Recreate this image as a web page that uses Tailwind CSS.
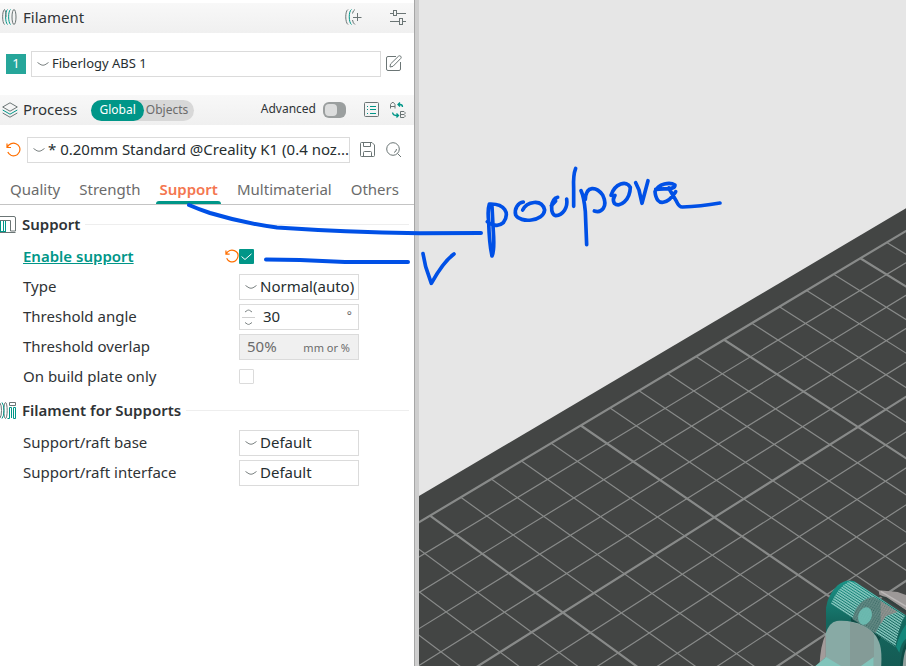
<!DOCTYPE html>
<html lang="en">
<head>
<meta charset="utf-8">
<title>Print settings</title>
<script src="https://cdn.jsdelivr.net/npm/@tailwindcss/browser@4"></script>
</head>
<body class="relative flex min-h-screen overflow-hidden bg-white font-['Noto_Sans',sans-serif] text-[15px] leading-5 text-[#2f3336]">

<aside class="flex w-[419px] shrink-0 flex-col border-r-4 border-[#cecece]">
 <div class="grow border-r border-[#a6a6a6] pt-[3px]">

  <header class="flex h-[30px] items-center bg-linear-to-b from-[#f8f8f8] to-[#f0f0f0] pr-2 pb-[3px] pl-px">
    <svg class="size-4" viewBox="0 0 16 16" fill="none" stroke="#6b7575"><path d="M3.500 .500C1 2 1 13.500 3.500 15.500"/><path stroke="#009688" d="M6.500 .500C4 2 4 13.500 6.500 15.500M9.500 .500C7 2 7 13.500 9.500 15.500"/><path d="M3.500 .500C4.500 2 5 4 5 8"/><ellipse cx="13" cy="8" rx="2" ry="7.500"/></svg>
    <h2 class="ml-1.5 grow">Filament</h2>
    <button aria-label="Add filament" class="mr-7"><svg class="h-4 w-[18px]" viewBox="0 0 18 16" fill="none" stroke="#6b7575"><path d="M4 .500C1 2 1 13.500 4 15.500M11 .500Q9 1.500 8.500 4.500M8.500 11Q9 14.500 11 15.500M9 8.500h8.500M13.500 4v8"/><path stroke="#009688" d="M7.500 .500C4.500 2 4.500 13.500 7.500 15.500"/></svg></button>
    <button aria-label="Filament settings"><svg class="size-4" viewBox="0 0 16 16" fill="none" stroke="#6b7575"><path d="M0 4.500h3M7 4.500h9M0 12.500h9M13 12.500h3"/><rect x="3.500" y="1.500" width="3" height="5"/><rect x="9.500" y="9.500" width="3" height="6"/></svg></button>
  </header>

  <div class="flex items-center py-[18px] pr-3 pl-1.5">
    <span class="flex size-5 items-center justify-center bg-[#26a69a] pb-0.5 text-[13px] text-white">1</span>
    <div class="relative ml-[5px] grow">
      <select aria-label="Filament" class="block h-[26px] w-full appearance-none border border-[#dbdbdb] bg-white pb-0.5 pl-5 text-[13px] text-[#262e30]"><option>Fiberlogy ABS 1</option></select>
      <svg class="pointer-events-none absolute top-2.5 left-1.5 h-1.5 w-3" viewBox="0 0 12 6" fill="none" stroke="#7b8282"><path d="M.5 1.500 4 3.800Q6 4.700 8 3.800L11.500 1.500"/></svg>
    </div>
    <button aria-label="Edit filament" class="ml-[5px] pb-0.5"><svg class="size-4" viewBox="0 0 16 16" fill="none" stroke="#6b7575"><path d="M10 1.500H2Q.5 1.500 .5 3V14Q.5 15.500 2 15.500H13Q14.500 15.500 14.500 14V7M4 12 4.500 9 12.500 1.200Q13.500 .300 14.700 1.200 15.700 2.300 14.800 3.400L7 11.300Z"/></svg></button>
  </div>

  <header class="flex h-[30px] items-center bg-linear-to-b from-[#f8f8f8] to-[#f0f0f0] pr-2 pl-0.5">
    <svg class="size-4" viewBox="0 0 16 16" fill="none" stroke="#6b7575"><path d="M8 .800 15.300 5 8 9.200 .700 5Z"/><path stroke="#009688" d="M.7 8 8 12.200 15.300 8"/><path d="M.7 11 8 15.200 15.300 11"/></svg>
    <h2 class="ml-[5px] pb-[3px]">Process</h2>
    <div class="ml-3.5 flex h-[21px] rounded-full bg-[#d8d8d8] text-xs">
      <button class="w-[53px] rounded-full bg-[#009688] text-white">Global</button>
      <button class="w-[50px] pr-1 text-[#6b6b6b]">Objects</button>
    </div>
    <label for="adv" class="ml-auto pb-0.5 text-xs">Advanced</label>
    <input id="adv" type="checkbox" role="switch" class="ml-[7px] h-4 w-[23px] appearance-none rounded-md bg-[#9b9f9f] before:m-0.5 before:block before:h-3 before:w-3 before:rounded-sm before:bg-[#dcdddd]">
    <button aria-label="Parameter table" class="ml-[18px]"><svg class="size-4" viewBox="0 0 16 16" fill="none" stroke="#6b7575"><rect x=".5" y=".5" width="14" height="14" rx="1"/><path stroke="#009688" d="M3 4.500h1M6 4.500h6M3 7.500h1M6 7.500h6M3 11.500h1M6 11.500h6"/></svg></button>
    <button aria-label="Compare presets" class="ml-2.5"><svg class="size-4" viewBox="0 0 16 16" fill="none" stroke="#6b7575"><path d="M.5 6.500V2.500L2 .500H3.500L5 2.500V6.500M.5 4.500H5M10.500 9.500V15.500H14L15 14.500V13.500L14 12.500H10.500M14 12.500 15 11.500V10.500L14 9.500H10.500"/><path stroke="#009688" stroke-width="1.300" d="M10 .500 8 2.500 10 4.500M8 2.500H10Q12.500 2.500 12.500 5M6.500 11.500 8.500 13.500 6.500 15.500M8 13.500H6Q3 13.500 2.500 10.500"/></svg></button>
  </header>

  <div class="flex items-center py-3 pr-3 pl-1.5">
    <button aria-label="Reset preset" class="pb-0.5"><svg class="size-[15px]" viewBox="0 0 15 15" fill="none" stroke="#ff6f00" stroke-width="1.200"><path d="M1 1.500V5.500H5M1.200 5.300C3 1.500 7 .500 10 1.700 13.500 3.200 14.800 6.500 13.300 10 11.500 13.500 8 14.500 5 13.300 3.500 12.600 2.500 11.500 1.800 10"/></svg></button>
    <div class="relative ml-1.5 min-w-0 grow">
      <select aria-label="Process preset" class="block h-[26px] w-full appearance-none border border-[#dbdbdb] bg-white pb-0.5 pl-5 text-[#262e30]"><option>* 0.20mm Standard @Creality K1 (0.4 noz...</option></select>
      <svg class="pointer-events-none absolute top-2.5 left-1.5 h-1.5 w-3" viewBox="0 0 12 6" fill="none" stroke="#7b8282"><path d="M.5 1.500 4 3.800Q6 4.700 8 3.800L11.500 1.500"/></svg>
    </div>
    <button aria-label="Save preset" class="ml-2.5"><svg class="size-4" viewBox="0 0 16 16" fill="none" stroke="#6b7575"><path d="M.5 1.500Q.5 .500 1.500 .500H12L14.500 3V13.500Q14.500 14.500 13.500 14.500H1.500Q.5 14.500 .5 13.500ZM3.500 .500V4.500H10.500V.500M3.500 14.500V10.500Q3.500 9.500 4.500 9.500H10.500Q11.500 9.500 11.500 10.500V14.500"/></svg></button>
    <button aria-label="Search settings" class="ml-2.5"><svg class="size-4" viewBox="0 0 16 16" fill="none" stroke="#6b7575"><circle cx="7" cy="7" r="6.300"/><path d="M11.500 11.500 15 15M10.500 7Q10.500 9.500 8 10.500"/></svg></button>
  </div>

  <nav class="flex h-[30px] justify-between border-b border-[#c4c4c4] pr-3 pl-[7px] text-[#6b6b6b]">
    <button class="px-[3px] pb-0.5">Quality</button>
    <button class="px-[3px] pb-0.5">Strength</button>
    <button class="relative px-[3px] pb-0.5 font-semibold text-[#f4764f] after:absolute after:inset-x-0 after:bottom-0 after:h-[3px] after:rounded-t-sm after:bg-[#009688]">Support</button>
    <button class="px-[3px] pb-0.5">Multimaterial</button>
    <button class="px-[3px] pb-0.5">Others</button>
  </nav>

  <main class="pt-px pr-[5px]">
    <section>
      <h3 class="flex h-9 items-center font-semibold">
        <svg class="h-[17px] w-4" viewBox="0 0 16 17" fill="none" stroke="#6b7575"><path d="M0 .500H14Q15.500 .500 15.500 2V15H10.500V4.500H0M0 16.500H15.500"/><path stroke="#009688" d="M.5 5V15.500M3.500 5V15.500M5.500 5V15.500M0 15.500H6"/></svg>
        <span class="mr-[5px] ml-1.5">Support</span><span class="h-px grow bg-[#eeeeee]"></span>
      </h3>
      <div class="flex h-[30px] items-center pl-[23px]">
        <label for="enable" class="w-[202px] pb-0.5 font-semibold text-[#009688] underline">Enable support</label>
        <button aria-label="Reset value" class="pb-0.5"><svg class="size-3.5" viewBox="0 0 15 15" fill="none" stroke="#ff6f00" stroke-width="1.300"><path d="M1 1.500V5.500H5M1.200 5.300C3 1.500 7 .500 10 1.700 13.500 3.200 14.800 6.500 13.300 10 11.500 13.500 8 14.500 5 13.300 3.500 12.600 2.500 11.500 1.800 10"/></svg></button>
        <span class="relative block h-4 w-[15px]">
          <input id="enable" type="checkbox" checked class="block size-[15px] appearance-none rounded-[1px] bg-[#009688]">
          <svg class="pointer-events-none absolute top-0 left-0 size-[15px]" viewBox="0 0 15 15" fill="none" stroke="#fff"><path d="M2.500 7.500 6 10.500 12.500 4.800"/></svg>
        </span>
      </div>
      <div class="flex h-[30px] items-center pl-[23px]">
        <label for="type" class="w-[216px] pb-0.5">Type</label>
        <div class="relative w-[120px]">
          <select id="type" class="block h-[26px] w-full appearance-none border border-[#dbdbdb] bg-white pb-0.5 pl-5 text-[#262e30]"><option>Normal(auto)</option></select>
          <svg class="pointer-events-none absolute top-2.5 left-1.5 h-1.5 w-3" viewBox="0 0 12 6" fill="none" stroke="#7b8282"><path d="M.5 1.500 4 3.800Q6 4.700 8 3.800L11.500 1.500"/></svg>
        </div>
      </div>
      <div class="flex h-[30px] items-center pl-[23px]">
        <label for="angle" class="w-[216px] pb-0.5">Threshold angle</label>
        <div class="flex h-[26px] w-[120px] items-center border border-[#dbdbdb] pr-1.5 pl-0.5">
          <svg class="h-[18px] w-[13px]" viewBox="0 0 13 18" fill="none" stroke="#7b8282"><path d="M3 4 5.500 2.300Q6.500 1.800 7.500 2.300L10 4M3 14.500 5.500 16.200Q6.500 16.700 7.500 16.200L10 14.500"/><path stroke="#cfcfcf" d="M0 9.500H13"/></svg>
          <input id="angle" value="30" class="ml-2 w-0 min-w-0 grow pb-0.5 text-[#262e30]">
          <span class="pb-0.5 text-xs text-[#6b6b6b]">°</span>
        </div>
      </div>
      <div class="flex h-[30px] items-center pl-[23px]">
        <label for="overlap" class="w-[216px] pb-0.5">Threshold overlap</label>
        <div class="flex h-[26px] w-[120px] items-center justify-between border border-[#dbdbdb] bg-[#f0f0f0] pr-2 pl-[7px] text-[#6b6b6b]">
          <input id="overlap" value="50%" disabled class="w-10 pb-0.5">
          <span class="pt-0.5 text-[11px]">mm or %</span>
        </div>
      </div>
      <div class="flex h-[30px] items-center pl-[23px]">
        <label for="plate" class="w-[216px] pb-0.5">On build plate only</label>
        <span class="h-4"><input id="plate" type="checkbox" class="block size-[15px] appearance-none rounded-[1px] border border-[#dbdbdb] bg-white"></span>
      </div>
    </section>

    <section>
      <h3 class="flex h-9 items-center font-semibold">
        <svg class="h-[17px] w-4" viewBox="0 0 16 17" fill="none" stroke="#6b7575"><ellipse cx="5.500" cy="8.500" rx="1.700" ry="8"/><path d="M0 1Q1.500 3 1.500 8.500T0 16M9.500 .500H15.500V3.500H9.500Z"/><path stroke="#009688" d="M2 .500Q4 3 4 8.500T2 16.500M7.500 16.500H9.500V5.500H11.500V16M13.500 16.500V5.500H15.500V16.500Z"/></svg>
        <span class="mr-[5px] ml-1.5">Filament for Supports</span><span class="h-px grow bg-[#eeeeee]"></span>
      </h3>
      <div class="flex h-[30px] items-center pl-[23px]">
        <label for="base" class="w-[216px] pb-0.5">Support/raft base</label>
        <div class="relative w-[120px]">
          <select id="base" class="block h-[26px] w-full appearance-none border border-[#dbdbdb] bg-white pb-0.5 pl-5 text-[#262e30]"><option>Default</option></select>
          <svg class="pointer-events-none absolute top-2.5 left-1.5 h-1.5 w-3" viewBox="0 0 12 6" fill="none" stroke="#7b8282"><path d="M.5 1.500 4 3.800Q6 4.700 8 3.800L11.500 1.500"/></svg>
        </div>
      </div>
      <div class="flex h-[30px] items-center pl-[23px]">
        <label for="iface" class="w-[216px] pb-0.5">Support/raft interface</label>
        <div class="relative w-[120px]">
          <select id="iface" class="block h-[26px] w-full appearance-none border border-[#dbdbdb] bg-white pb-0.5 pl-5 text-[#262e30]"><option>Default</option></select>
          <svg class="pointer-events-none absolute top-2.5 left-1.5 h-1.5 w-3" viewBox="0 0 12 6" fill="none" stroke="#7b8282"><path d="M.5 1.500 4 3.800Q6 4.700 8 3.800L11.500 1.500"/></svg>
        </div>
      </div>
    </section>
  </main>
 </div>
</aside>

<div class="relative min-w-0 grow overflow-hidden bg-[#e6e6e6]">
  <svg class="absolute inset-0 size-full" viewBox="419 0 487 666" preserveAspectRatio="xMinYMin slice">
    <defs>
      <pattern id="ribs" width="10" height="7" patternUnits="userSpaceOnUse" patternTransform="rotate(33)"><rect width="10" height="4" fill="#8ccbc3"/></pattern>
      <pattern id="dots" width="7" height="7" patternUnits="userSpaceOnUse" patternTransform="rotate(33)"><rect width="3.500" height="3.500" fill="#3b6a66"/></pattern>
      <linearGradient id="cap" x1="0" y1="0" x2="0" y2="1"><stop offset="0" stop-color="#1a9286"/><stop offset=".45" stop-color="#14685f"/><stop offset="1" stop-color="#155a53"/></linearGradient>
    </defs>
    <path fill="#434544" d="M400 507.200 1000 152.800V700H400Z"/>
    <g id="grid" stroke="#888a89" fill="none"></g>
    <g transform="translate(786 556) scale(.33333)">
      <path fill="url(#cap)" d="M88 330 120 303V155Q126 115 155 88 180 68 205 76L375 188V340H88Z"/>
      <path fill="#0f4b45" d="M195 185 285 242 270 270 265 232 195 212Z"/>
      <path fill="#14877b" d="M330 272Q345 215 375 190V240Q345 250 340 290Z"/>
      <path fill="url(#ribs)" d="M135 143Q155 95 190 76L210 80 358 178Q340 205 328 272Z"/>
      <path fill="#64847f" opacity=".85" d="M200 185Q215 130 262 122L285 135V200L268 232 200 190Z"/>
      <path fill="url(#dots)" d="M200 185Q215 130 262 122L285 135V200L268 232 200 190Z"/>
      <path fill="#9b8f8d" opacity=".85" d="M284 134 335 168 300 180 284 205Z"/>
      <path fill="url(#dots)" opacity=".5" d="M284 134 335 168 300 180 284 205Z"/>
      <ellipse cx="237" cy="180" rx="20" ry="27" fill="#6fc2b7" opacity=".85" transform="rotate(20 237 180)"/>
      <path fill="#88aaa5" d="M118 235Q130 198 152 195C205 190 250 212 270 240 284 262 289 285 285 340H118Z"/>
      <path fill="#849b97" d="M192 197Q238 206 264 233V340H192Z"/>
      <path fill="#a39b9a" d="M100 340Q102 270 119 235V304L100 321Z"/>
      <path fill="#82c4bb" d="M88 340V330L120 303 165 330V340ZM225 340V330L263 303V340Z"/>
      <path fill="#33403e" d="M278 118 375 182V174L300 122Z"/>
      <path fill="#9d9998" d="M278 103 335 108 375 122V172L302 124 280 116Z"/>
      <path stroke="#bcb9b8" stroke-width="4" d="M284 106 375 160"/>
      <path fill="#0f4b45" d="M375 240Q345 265 342 340H350Q350 280 375 255Z"/>
      <path fill="#93a19e" d="M375 255Q352 275 350 340H375Z"/>
    </g>
  </svg>
</div>

<svg class="pointer-events-none absolute top-0 left-0 h-[300px] w-[740px]" viewBox="0 0 740 300" fill="none" stroke="#0050e6" stroke-linecap="round" stroke-linejoin="round" role="img" aria-label="Handwritten note: podpora">
  <path stroke-width="4" d="M189 205Q198 209 210 213 243 223 277 227.500 343 232 420 233.300L481 233M266 259.500 300 260 345 262H408"/>
  <g transform="translate(410 160) scale(.33333)" stroke-width="11">
    <path d="M39 281 47 320 64 370Q100 305 132 282"/>
    <path d="M232 185Q262 205 280 188C300 160 285 130 238 132Q232 150 236 185C237 225 242 270 246 288Q254 270 250 215L246 140"/>
    <path d="M338 150C350 125 395 115 404 150 400 185 330 190 317 165 312 145 325 128 340 126"/>
    <path d="M443 112C420 118 420 165 437 167 460 165 474 142 470 117M424 137 437 123"/>
    <path d="M497 25Q489 45 491 85V139"/>
    <path d="M513 92Q522 110 526 155L530 254M526 118C528 75 560 80 578 105 595 140 575 160 553 153"/>
    <path d="M603 106C615 70 650 60 661 82 660 120 630 145 613 130 605 115 615 110 615 106"/>
    <path d="M677 68 687 90 696 130 714 62"/>
    <path d="M737 88C770 85 795 90 795 75 780 65 745 70 735 95 740 145 775 130 797 95M776 84 800 125Q808 142 818 141 870 139 930 129"/>
  </g>
</svg>

<script>
// Perspective projection of the build-plate cells, solved from four known cell corners.
const known = [[0,0,430,515.7],[15,0,860.3,258.3],[10,5,858,427],[3,10,795.7,654]];
const m = [];
for (const [i,j,x,y] of known) {
  m.push([i,j,1,0,0,0,-i*x,-j*x,x]);
  m.push([0,0,0,i,j,1,-i*y,-j*y,y]);
}
for (let c = 0; c < 8; c++) {
  let p = c;
  for (let r = c + 1; r < 8; r++) if (Math.abs(m[r][c]) > Math.abs(m[p][c])) p = r;
  [m[c], m[p]] = [m[p], m[c]];
  for (let r = 0; r < 8; r++) {
    if (r === c) continue;
    const f = m[r][c] / m[c][c];
    for (let k = c; k < 9; k++) m[r][k] -= f * m[c][k];
  }
}
const h = m.map((row, k) => row[8] / row[k]);
const at = (i, j) => {
  const w = h[6]*i + h[7]*j + 1;
  return ((h[0]*i + h[1]*j + h[2]) / w).toFixed(2) + ' ' + ((h[3]*i + h[4]*j + h[5]) / w).toFixed(2);
};
let thin = '', bold = '';
for (let i = -8; i <= 20; i++) { const d = 'M' + at(i,0) + 'L' + at(i,14); i % 5 ? thin += d : bold += d; }
for (let j = 0; j <= 14; j++) { const d = 'M' + at(-8,j) + 'L' + at(20,j); j % 5 ? thin += d : bold += d; }
document.getElementById('grid').innerHTML = `<path stroke-width="1.2" d="${thin}"/><path stroke-width="2.2" d="${bold}"/>`;
</script>
</body>
</html>
